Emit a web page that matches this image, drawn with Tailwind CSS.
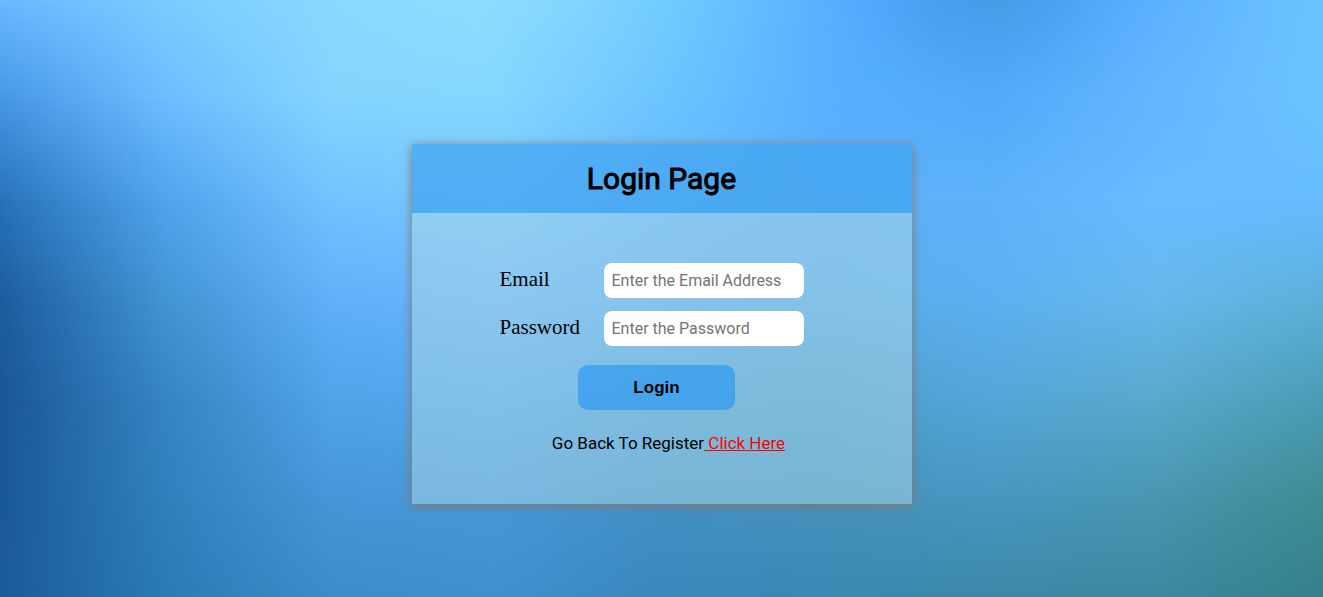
<!DOCTYPE html>
<html lang="en">
<head>
<meta charset="utf-8">
<meta name="viewport" content="width=device-width, initial-scale=1">
<title>Login Page</title>
<script src="https://cdn.jsdelivr.net/npm/@tailwindcss/browser@4"></script>
</head>
<body class="relative isolate min-h-screen overflow-x-hidden font-['Roboto',sans-serif] text-black">
  <!-- Backdrop: horizontal colour bands, each fading into the next one down -->
  <div aria-hidden="true" class="absolute inset-0 -z-10">
    <div class="absolute inset-0 bg-[linear-gradient(90deg,#68b9ff,#7accff_12.5%,#8ad8ff_25%,#8edcff_36%,#84d6ff_43%,#72ccff_50%,#5eb6ff_60%,#50a8fc_66%,#489eee_71%,#469ce8_75%,#4aa0ee_79%,#58acff_85%,#64baff_93%,#6cc4ff)]"></div>
    <div class="absolute inset-0 bg-[linear-gradient(90deg,#4696e6,#6cbcff,#84d4ff,#84d6ff,#6cc4ff,#58b0ff,#52aafa,#64b6ff,#6cc4ff)] [mask-image:linear-gradient(transparent_0%,black_16.7%)]"></div>
    <div class="absolute inset-0 bg-[linear-gradient(90deg,#2872b8,#50a4ec,#72c2ff,#76caff,#66baff,#5eb0fa,#5eb2fa,#68bcff,#66bcff)] [mask-image:linear-gradient(transparent_16.7%,black_33.5%)]"></div>
    <div class="absolute inset-0 bg-[linear-gradient(90deg,#1c5c9e,#4294d2,#60b0f8,#66b6fe,#5eaef4,#5aace8,#5cb0f0,#66b8ec,#5cb0d8)] [mask-image:linear-gradient(transparent_33.5%,black_50.2%)]"></div>
    <div class="absolute inset-0 bg-[linear-gradient(90deg,#1a5698,#3684c2,#50a4e8,#54a8ec,#4ca0d8,#4c9ece,#54a6d8,#5aa8cc,#4a9cb4)] [mask-image:linear-gradient(transparent_50.2%,black_67%)]"></div>
    <div class="absolute inset-0 bg-[linear-gradient(90deg,#1a5898,#3080bc,#4696d8,#4698da,#4390c6,#4592bc,#4896c0,#4896b0,#3e8c92)] [mask-image:linear-gradient(transparent_67%,black_83.7%)]"></div>
    <div class="absolute inset-0 bg-[linear-gradient(90deg,#1c5a9c,#2a7ab6,#3c8cc8,#408fcf,#3a87bd,#3b88b4,#3c88a8,#3c88a0,#34808a)] [mask-image:linear-gradient(transparent_83.7%,black_100%)]"></div>
  </div>

  <main class="px-4 pt-36 pb-20">
    <section class="mx-auto max-w-[500px] bg-[#add8e6]/50 pb-12 shadow-[0_2px_10px_#807870]">
      <h1 class="bg-[#0e8cf5]/50 py-4 text-center text-[30px] leading-[37px] font-normal [-webkit-text-stroke:1px_black]">Login Page</h1>
      <form class="mx-auto flex w-[324px] flex-col pt-[50px]">
        <div class="flex items-start gap-6">
          <label for="email" class="w-20 font-['Liberation_Serif',serif] text-[21px] leading-8">Email</label>
          <input id="email" type="email" placeholder="Enter the Email Address" class="h-[35px] w-[200px] rounded-lg bg-white px-2 text-base placeholder:text-[#757575]">
        </div>
        <div class="mt-[13px] flex items-start gap-6">
          <label for="password" class="w-20 font-['Liberation_Serif',serif] text-[21px] leading-8">Password</label>
          <input id="password" type="password" placeholder="Enter the Password" class="h-[35px] w-[200px] rounded-lg bg-white px-2 text-base placeholder:text-[#757575]">
        </div>
        <button type="button" class="mt-[19px] mr-2.5 h-[45px] w-[157px] self-center rounded-[10px] bg-[#0e8cf5]/50 font-['Liberation_Sans',sans-serif] text-[17px] font-bold">Login</button>
        <p class="mt-5 ml-3.5 text-center text-[17px] leading-[26px] whitespace-nowrap">Go Back To Register<a href="#" class="text-[#ff0000] underline"> Click Here</a></p>
      </form>
    </section>
  </main>
</body>
</html>
